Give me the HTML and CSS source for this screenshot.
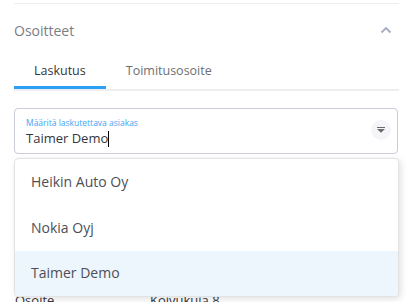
FILE: index.html
```html
<!DOCTYPE html>
<html lang="fi">
<head>
    <meta charset="UTF-8">
    <title>Osoitteet</title>
    <link rel="stylesheet" href="styles.css">
</head>
<body>
    <div class="panel">
        <div class="section-header">
            <h2>Osoitteet</h2>
            <svg class="collapse-icon" width="12" height="8" viewBox="0 0 12 8">
                <path d="M1.5 6.5 L6 2 L10.5 6.5" fill="none" stroke="#a7abc3" stroke-width="1.8"/>
            </svg>
        </div>

        <div class="tabs">
            <div class="tab active">Laskutus</div>
            <div class="tab">Toimitusosoite</div>
        </div>

        <div class="field-wrap">
            <div class="field">
                <div class="field-text">
                    <label>Määritä laskutettava asiakas</label>
                    <div class="value">Taimer Demo<span class="caret"></span></div>
                </div>
                <div class="dropdown-btn">
                    <svg width="10" height="6" viewBox="0 0 10 6">
                        <path d="M1 0.5 H9 M2.5 2.5 H7.5 L5 5 Z" fill="#6b6b6b" stroke="#6b6b6b" stroke-width="1.2"/>
                    </svg>
                </div>
            </div>

            <ul class="menu">
                <li>Heikin Auto Oy</li>
                <li>Nokia Oyj</li>
                <li class="selected">Taimer Demo</li>
            </ul>
        </div>

        <div class="info-row">
            <span class="info-label">Osoite</span>
            <span class="info-value">Koivukuja 8</span>
        </div>
    </div>
</body>
</html>
```

FILE: styles.css
```css
* {
    margin: 0;
    padding: 0;
    box-sizing: border-box;
    font-family: 'Open Sans', sans-serif;
}

body {
    background-color: #fff;
    overflow: hidden;
}

.panel {
    margin-left: 14px;
    width: 385px;
    padding-top: 3px;
}

.section-header {
    border-top: 1px solid #eeeeee;
    height: 52px;
    display: flex;
    align-items: center;
    justify-content: space-between;
    padding-right: 7px;
}

.section-header h2 {
    font-size: 14px;
    font-weight: 400;
    color: #7b7d83;
    margin-top: 1px;
}

.tabs {
    display: flex;
    border-bottom: 2px solid #eeeeee;
    height: 36px;
}

.tab {
    padding: 0 20px;
    font-size: 12.5px;
    color: #6d6f75;
    line-height: 31px;
}

.tab.active {
    color: #34363c;
    border-bottom: 3px solid #2d9ff5;
}

.field-wrap {
    position: relative;
    margin-top: 17px;
}

.field {
    height: 46px;
    width: 384px;
    border: 1px solid #c9cdda;
    border-radius: 4px;
    display: flex;
    align-items: center;
    justify-content: space-between;
    padding: 0 6px 0 11px;
}

.field-text label {
    display: block;
    font-size: 8.5px;
    color: #3fa5f3;
    line-height: 12px;
    margin-top: 1px;
}

.field-text .value {
    font-size: 13px;
    color: #34363c;
    line-height: 18px;
}

.caret {
    display: inline-block;
    width: 1px;
    height: 16px;
    background-color: #000;
    vertical-align: -4px;
}

.dropdown-btn {
    width: 20px;
    height: 20px;
    border-radius: 50%;
    background-color: #f4f4f9;
    display: flex;
    align-items: center;
    justify-content: center;
    margin-top: -2px;
}

.menu {
    position: absolute;
    top: 50px;
    left: 0;
    width: 385px;
    list-style: none;
    background: #fff;
    border: 1px solid #e2e2e2;
    border-radius: 4px;
    box-shadow: 2px 2px 6px rgba(0,0,0,0.12);
    overflow: hidden;
    z-index: 2;
}

.menu li {
    height: 46px;
    line-height: 46px;
    padding-left: 16px;
    font-size: 14px;
    color: #4d4f55;
}

.menu li.selected {
    background-color: #edf5fd;
    height: 45px;
    line-height: 44px;
}

.info-row {
    display: flex;
    margin-top: 137px;
    font-size: 13px;
    color: #34363c;
    padding-left: 1px;
}

.info-label {
    width: 135px;
}
```
